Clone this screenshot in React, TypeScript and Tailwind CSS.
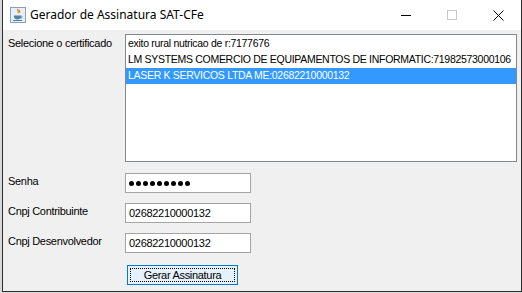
import React from 'react';

const certs = [
  'exito rural nutricao de r:7177676',
  'LM SYSTEMS COMERCIO DE EQUIPAMENTOS DE INFORMATIC:71982573000106',
  'LASER K SERVICOS LTDA ME:02682210000132',
];

const JavaIcon = () => (
  <svg width="16" height="16" viewBox="0 0 16 16">
    <rect x="0.5" y="0.5" width="15" height="15" fill="#e8eef6" stroke="#8aa0bb" />
    <path d="M8 2c-1.5 1.5 1.5 2 0 4M9.5 3c-1 1 1 1.3 0 2.6" stroke="#e76f00" strokeWidth="1.1" fill="none" />
    <path d="M4 8.5h7v1.5c0 1.5-1.5 2.5-3.5 2.5S4 11.5 4 10z" fill="#5382a1" />
    <path d="M11 9c1.6 0 1.6 2-0.5 2" stroke="#5382a1" strokeWidth="0.9" fill="none" />
    <path d="M3 13.5h9" stroke="#5382a1" strokeWidth="1" />
  </svg>
);

const Field = ({ label, value, password }: { label: string; value: string; password?: boolean }) => (
  <div className="flex h-[20px] items-start">
    <div className="w-[117px] pt-[1px] leading-[14px]">{label}</div>
    <div className="flex h-[20px] w-[126px] items-center border border-[#a5a5a5] bg-white px-[3px]">
      {password ? (
        <div className="flex gap-[2px]" aria-label={value}>
          {Array.from({ length: 9 }).map((_, i) => (
            <span key={i} className="h-[5px] w-[5px] rounded-full bg-black" />
          ))}
        </div>
      ) : (
        <span className="leading-none">{value}</span>
      )}
    </div>
  </div>
);

export default function App() {
  return (
    <div className="h-[293px] w-[522px] overflow-hidden bg-[#d9d9d9] pl-[2px]">
      <div className="flex h-[292px] w-[520px] flex-col border-x border-b border-[#2e2e2e] bg-[#f0f0f0]">
        <div className="flex h-[30px] shrink-0 items-center bg-white pl-[7px] [font-family:'Noto_Sans',sans-serif] text-[12px] text-black">
          <JavaIcon />
          <span className="ml-[4px]">Gerador de Assinatura SAT-CFe</span>
          <div className="ml-auto flex h-full items-center">
            <div className="flex h-full w-[46px] items-center justify-center">
              <div className="h-px w-[10px] bg-black" />
            </div>
            <div className="flex h-full w-[46px] items-center justify-center">
              <div className="h-[10px] w-[10px] border border-[#c8c8c8]" />
            </div>
            <div className="flex h-full w-[46px] items-center justify-center">
              <svg width="11" height="11" viewBox="0 0 11 11">
                <path d="M0.5 0.5l10 10M10.5 0.5l-10 10" stroke="#000" strokeWidth="1" />
              </svg>
            </div>
          </div>
        </div>
        <div className="flex flex-col pl-[5px] pt-[4px] [font-family:'Liberation_Sans',sans-serif] text-[11px] tracking-[-0.3px] text-black">
          <div className="flex items-start">
            <div className="w-[117px] pt-[1px]">Selecione o certificado</div>
            <div className="h-[128px] w-[392px] border border-[#828790] bg-white pt-px text-[10.5px] tracking-[-0.3px]">
              {certs.map((c, i) => (
                <div
                  key={c}
                  className={`flex h-[16px] items-center whitespace-nowrap px-[2px] ${i === 2 ? 'bg-[#3399ff] text-white' : ''}`}
                >
                  {c}
                </div>
              ))}
            </div>
          </div>
          <div className="mt-[11px] flex flex-col gap-[10px]">
            <Field label="Senha" value="●●●●●●●●●" password />
            <Field label="Cnpj Contribuinte" value="02682210000132" />
            <Field label="Cnpj Desenvolvedor" value="02682210000132" />
          </div>
          <div className="ml-[119px] mt-[12px]">
            <button className="flex h-[20px] w-[111px] items-center justify-center border border-[#0078d7] bg-[#e5f1fb] p-[2px]">
              <span className="flex h-full w-full items-center justify-center border border-dotted border-black">
                Gerar Assinatura
              </span>
            </button>
          </div>
        </div>
      </div>
    </div>
  );
}
